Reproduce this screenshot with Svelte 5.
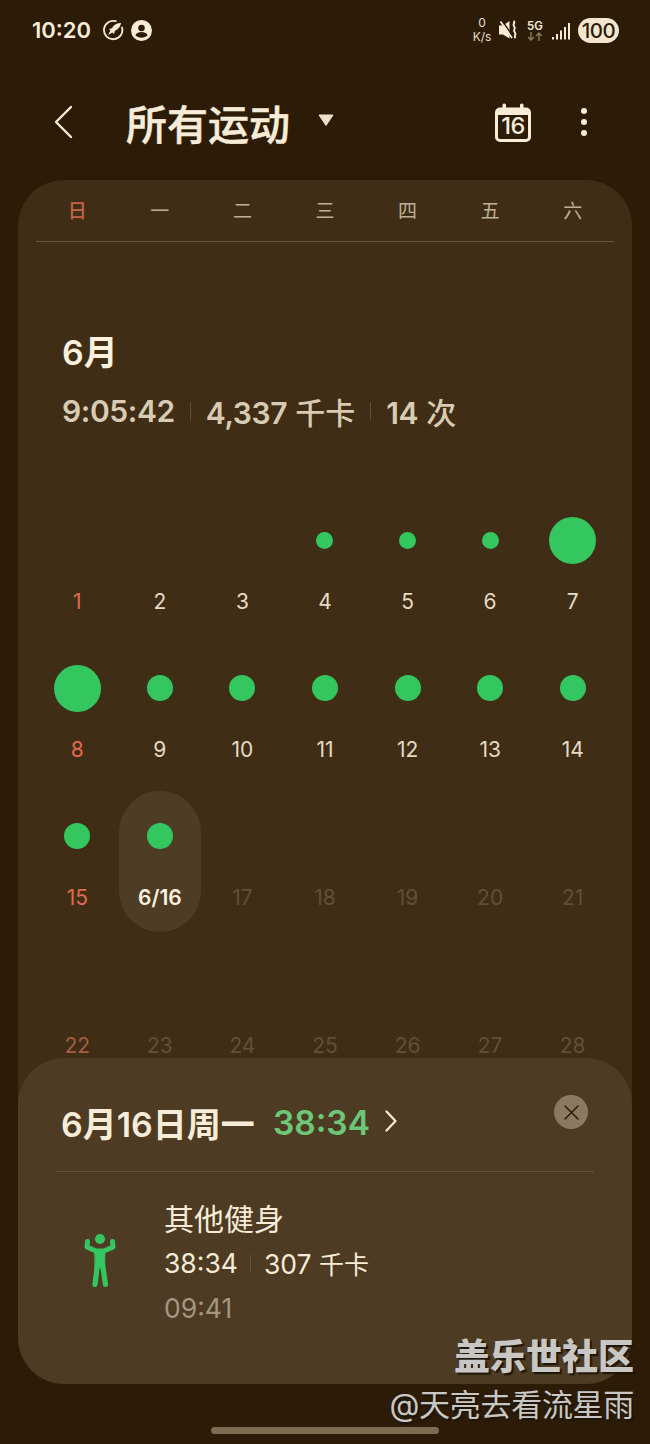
<script lang="ts">
	const weekdays = ['日', '一', '二', '三', '四', '五', '六'];

	// r: dot diameter, 0 for a day with no workout
	const days = [
		{ n: '1', r: 0 }, { n: '2', r: 0 }, { n: '3', r: 0 }, { n: '4', r: 17 }, { n: '5', r: 17 }, { n: '6', r: 17 }, { n: '7', r: 47 },
		{ n: '8', r: 47 }, { n: '9', r: 26 }, { n: '10', r: 26 }, { n: '11', r: 26 }, { n: '12', r: 26 }, { n: '13', r: 26 }, { n: '14', r: 26 },
		{ n: '15', r: 26 }, { n: '6/16', r: 26, selected: true }, { n: '17', r: 0, future: true }, { n: '18', r: 0, future: true }, { n: '19', r: 0, future: true }, { n: '20', r: 0, future: true }, { n: '21', r: 0, future: true },
		{ n: '22', r: 0, future: true }, { n: '23', r: 0, future: true }, { n: '24', r: 0, future: true }, { n: '25', r: 0, future: true }, { n: '26', r: 0, future: true }, { n: '27', r: 0, future: true }, { n: '28', r: 0, future: true }
	];
</script>

<div class="page">
	<div class="status">
		<div class="status-left">
			<span class="clock">10:20</span>
			<svg width="22" height="22" viewBox="0 0 22 22" fill="none">
				<path d="M20 8.500a9.200 9.200 0 1 1-6.300-6.300" stroke="#f7ecd8" stroke-width="1.800" stroke-linecap="round" />
				<path d="M18 4c-3.800.2-6.300 1.900-8 5.200l-3 .8 1.400 1.600-2.400 4.400 4.400-2.400 1.600 1.400.8-3c3.300-1.700 5.900-4.200 6.200-8z" fill="#f7ecd8" />
			</svg>
			<svg width="21" height="21" viewBox="0 0 22 22">
				<circle cx="11" cy="11" r="11" fill="#f7ecd8" />
				<circle cx="11" cy="8.300" r="3.400" fill="#2c1c07" />
				<path d="M4.500 16c1.200-2.300 3.800-3.400 6.500-3.400s5.300 1.100 6.500 3.400c-1.500 1.600-4 2.500-6.500 2.500s-5-.9-6.500-2.500z" fill="#2c1c07" />
			</svg>
		</div>
		<div class="status-right">
			<div class="speed"><span>0</span><span>K/s</span></div>
			<svg class="mute" width="19" height="20" viewBox="0 0 19 20" fill="#f7ecd8">
				<path d="M0 5.500h4L10.500 1v17.500L4 14.500H0z" />
				<path d="M3 0.500L13.500 16" stroke="#2c1c07" stroke-width="1.400" fill="none" />
				<path d="M1.500 1.500L13 18" stroke="#f7ecd8" stroke-width="1.800" fill="none" />
				<path d="M14.500 1c2.600 2-1.800 3.600.6 5.600s-1.800 3.600.6 5.600-1.400 3.400.8 6" stroke="#f7ecd8" stroke-width="2" fill="none" />
			</svg>
			<div class="net">
				<span>5G</span>
				<svg width="16" height="9" viewBox="0 0 16 9" fill="none" stroke="#85775f" stroke-width="1.500">
					<path d="M4 0v8M1 5l3 3 3-3" />
					<path d="M12 9V1M9 4l3-3 3 3" />
				</svg>
			</div>
			<svg class="signal" width="18" height="18" viewBox="0 0 18 18" fill="#f7ecd8">
				<rect x="0" y="15" width="2" height="2.500" />
				<rect x="4" y="12" width="2" height="5.500" />
				<rect x="8" y="8.500" width="2" height="9" />
				<rect x="12" y="5" width="2" height="12.500" />
				<rect x="16" y="1" width="2" height="16.500" />
			</svg>
			<span class="battery">100</span>
		</div>
	</div>

	<header class="topbar">
		<svg class="back" width="19" height="34" viewBox="0 0 19 34" fill="none">
			<path d="M17 2L2 17l15 15" stroke="#f7ecd8" stroke-width="2.400" stroke-linecap="round" stroke-linejoin="round" />
		</svg>
		<h1>所有运动</h1>
		<svg class="caret" width="16" height="12" viewBox="0 0 16 12">
			<path d="M1 1h14L8 11.500z" fill="#eee2cc" stroke="#eee2cc" stroke-linejoin="round" />
		</svg>
		<div class="cal">
			<svg width="36" height="39" viewBox="0 0 36 39" fill="none">
				<rect x="1.500" y="6" width="33" height="31.500" rx="3.500" stroke="#f7ecd8" stroke-width="3" />
				<rect x="1.500" y="6" width="33" height="6" fill="#f7ecd8" />
				<rect x="7.500" y="0.500" width="3.500" height="7" rx="1.500" fill="#f7ecd8" />
				<rect x="25" y="0.500" width="3.500" height="7" rx="1.500" fill="#f7ecd8" />
			</svg>
			<span>16</span>
		</div>
		<div class="more"><i></i><i></i><i></i></div>
	</header>

	<main class="card">
		<div class="weekdays">
			{#each weekdays as w, i}
				<span class:sun={i === 0}>{w}</span>
			{/each}
		</div>

		<div class="month">
			<h2>6月</h2>
			<div class="stats">
				<span>9:05:42</span>
				<i class="sep"></i>
				<span>4,337 <span class="cjk">千卡</span></span>
				<i class="sep"></i>
				<span>14 <span class="cjk">次</span></span>
			</div>
		</div>

		<div class="grid">
			{#each days as d, i}
				<div class="day" class:sun={i % 7 === 0} class:future={d.future} class:selected={d.selected}>
					<div class="slot">
						{#if d.r}
							<span class="dot" style="width: {d.r}px; height: {d.r}px;"></span>
						{/if}
					</div>
					<span class="num">{d.n}</span>
				</div>
			{/each}
		</div>
	</main>

	<section class="sheet">
		<div class="sheet-head">
			<span class="date">6月16日周一</span>
			<span class="total">38:34</span>
			<svg class="chevron" width="12" height="22" viewBox="0 0 12 22" fill="none">
				<path d="M1.500 1.500L10.500 11l-9 9.500" stroke="#f7ecd8" stroke-width="2.200" stroke-linecap="round" stroke-linejoin="round" />
			</svg>
			<button class="close" aria-label="关闭">
				<svg width="15" height="15" viewBox="0 0 15 15" fill="none">
					<path d="M1 1l13 13M14 1L1 14" stroke="#2c1c07" stroke-width="1.500" stroke-linecap="round" />
				</svg>
			</button>
		</div>
		<div class="entry">
			<svg class="figure" width="34" height="54" viewBox="23 14 34 54" fill="none" stroke="#34c65f" stroke-linecap="round" stroke-linejoin="round">
				<circle cx="40" cy="19" r="5" fill="#34c65f" stroke="none" />
				<path d="M27.500 21.500l-.5 5.500L36 31h8l9-4-.5-5.500" stroke-width="5" />
				<path d="M35 30h10l-.5 18h-9z" fill="#34c65f" stroke="#34c65f" stroke-width="1" />
				<path d="M37.500 44L35 64.500M42.500 44L45.500 64.500" stroke-width="5.200" />
			</svg>
			<div class="entry-text">
				<div class="entry-name">其他健身</div>
				<div class="entry-stats">
					<span>38:34</span>
					<i class="sep"></i>
					<span>307 <span class="unit">千卡</span></span>
				</div>
				<div class="entry-time">09:41</div>
			</div>
		</div>
	</section>

	<div class="watermark">
		<strong>盖乐世社区</strong>
		<span>@天亮去看流星雨</span>
	</div>
	<div class="home"></div>
</div>

<style>
	:global(body) {
		margin: 0;
		background: #2c1c07;
	}

	.page {
		position: relative;
		width: 650px;
		height: 1444px;
		overflow: hidden;
		background: #2c1c07;
		color: #f7ecd8;
		font-family: Inter, 'Noto Sans CJK SC', sans-serif;
	}

	.status {
		display: flex;
		justify-content: space-between;
		align-items: center;
		height: 60px;
		padding: 0 31px 0 32px;
		box-sizing: border-box;
	}

	.status-left {
		display: flex;
		align-items: center;
		gap: 7px;
	}

	.clock {
		font-size: 22px;
		font-weight: 600;
		margin-right: 4px;
	}

	.status-right {
		display: flex;
		align-items: center;
	}

	.speed {
		display: flex;
		flex-direction: column;
		align-items: center;
		font-size: 12px;
		line-height: 14px;
		width: 20px;
		color: #e8dcc7;
	}

	.mute {
		margin-left: 7px;
	}

	.net {
		display: flex;
		flex-direction: column;
		align-items: center;
		margin-left: 9px;
		font-size: 11.500px;
		line-height: 12px;
		font-weight: 600;
	}

	.signal {
		margin-left: 9px;
		margin-top: 1px;
	}

	.battery {
		margin-left: 8px;
		width: 41px;
		height: 25px;
		border-radius: 13px;
		background: #f2e6d1;
		color: #2c1c07;
		font-size: 20.500px;
		font-weight: 500;
		line-height: 25px;
		text-align: center;
		letter-spacing: -0.5px;
	}

	.topbar {
		display: flex;
		align-items: center;
		height: 120px;
		padding: 4px 63px 0 54px;
		box-sizing: border-box;
	}

	h1 {
		margin: 6px 0 0 53px;
		font-size: 41px;
		font-weight: 500;
		line-height: 56px;
		-webkit-text-stroke: 0.5px #f7ecd8;
	}

	.caret {
		margin: 0 0 4px 28px;
	}

	.cal {
		position: relative;
		margin-left: auto;
		width: 36px;
		height: 39px;
	}

	.cal svg {
		display: block;
	}

	.cal span {
		position: absolute;
		left: 0;
		right: 0;
		top: 9px;
		text-align: center;
		font-size: 23.500px;
		line-height: 28px;
		font-weight: 500;
		letter-spacing: -0.5px;
	}

	.more {
		display: flex;
		flex-direction: column;
		gap: 5px;
		margin-left: 50px;
	}

	.more i {
		display: block;
		width: 6px;
		height: 6px;
		border-radius: 50%;
		background: #f7ecd8;
	}

	/* ends behind the sheet */
	.card {
		margin: 0 18px;
		height: 1000px;
		padding: 0 18px;
		border-radius: 46px 46px 0 0;
		background: #3f2e15;
	}

	.weekdays {
		display: grid;
		grid-template-columns: repeat(7, 1fr);
		height: 62px;
		border-bottom: 1.500px solid #66563e;
		box-sizing: border-box;
		align-items: center;
		text-align: center;
		font-size: 19px;
		color: #bdb09a;
		padding-bottom: 3px;
	}

	.weekdays .sun {
		color: #c4634a;
		font-weight: 500;
	}

	.month {
		padding: 87px 0 0 26px;
	}

	h2 {
		margin: 0;
		font-size: 34px;
		font-weight: 600;
		line-height: 48px;
		color: #fbf1dd;
	}

	.stats {
		display: flex;
		align-items: center;
		margin-top: 14px;
		height: 40px;
		font-size: 30px;
		font-weight: 600;
		letter-spacing: -0.4px;
		color: #d8cbb3;
	}

	.cjk {
		font-weight: 500;
		letter-spacing: 0;
		margin-left: 1px;
	}

	.sep {
		display: block;
		width: 1px;
		height: 18px;
		margin: 0 15px;
		background: #5f4f38;
	}

	.grid {
		display: grid;
		grid-template-columns: repeat(7, 1fr);
		row-gap: 51px;
		margin-top: 85px;
	}

	.day {
		display: flex;
		flex-direction: column;
		align-items: center;
		gap: 26px;
		color: #e6dac4;
		font-size: 21px;
		margin-bottom: -1px;
	}

	.day.sun {
		color: #e2694f;
	}

	.day.future {
		color: #5f503a;
	}

	.day.sun.future {
		color: #a35c43;
	}

	.day.selected {
		padding: 21px 0 22px;
		margin: -21px 0 -23px;
		border-radius: 41px;
		background: #4e3d25;
		color: #fbf1dd;
		font-weight: 600;
	}

	.slot {
		display: flex;
		align-items: center;
		justify-content: center;
		height: 48px;
	}

	.dot {
		display: block;
		border-radius: 50%;
		background: #34c65f;
	}

	.num {
		line-height: 24px;
	}

	.sheet {
		position: absolute;
		left: 18px;
		right: 18px;
		top: 1058px;
		height: 326px;
		border-radius: 46px;
		background: #4d3b23;
		padding: 0 38px;
		box-sizing: border-box;
	}

	.sheet-head {
		position: relative;
		display: flex;
		align-items: center;
		height: 114px;
		padding: 16px 0 0 5px;
		box-sizing: border-box;
		border-bottom: 1.500px solid #655439;
		font-size: 33.500px;
		font-weight: 600;
	}

	.date {
		font-size: 34px;
	}

	.total {
		margin: 0 15px 0 18px;
		color: #6cc777;
	}

	.chevron {
		margin-bottom: 3px;
	}

	.close {
		position: absolute;
		right: 6px;
		top: 37px;
		display: flex;
		align-items: center;
		justify-content: center;
		width: 34px;
		height: 34px;
		border: 0;
		padding: 0;
		border-radius: 50%;
		background: #8b7a63;
	}

	.entry {
		display: flex;
		align-items: flex-start;
		padding-top: 27px;
	}

	.figure {
		margin: 35px 0 0 27px;
	}

	.entry-text {
		margin-left: 47px;
	}

	.entry-name {
		font-size: 30px;
		line-height: 40px;
	}

	.entry-stats {
		display: flex;
		align-items: center;
		margin-top: 6px;
		height: 36px;
		font-size: 26.500px;
	}

	.unit {
		font-size: 25px;
	}

	.entry-stats .sep {
		height: 16px;
		margin: 0 13px 0 12px;
		background: #66563e;
	}

	.entry-time {
		margin-top: 9px;
		font-size: 26.500px;
		line-height: 36px;
		color: #a39682;
	}

	.watermark {
		position: absolute;
		right: 16px;
		top: 1334px;
		display: flex;
		flex-direction: column;
		align-items: flex-end;
		color: #c9c7c4;
		text-shadow: 2px 2px 1px #1d1508;
	}

	.watermark strong {
		font-size: 36px;
		line-height: 46px;
		font-weight: 900;
	}

	.watermark span {
		font-size: 31px;
		line-height: 40px;
		margin-top: 5px;
		font-weight: 400;
		letter-spacing: -0.3px;
	}

	.home {
		position: absolute;
		left: 211px;
		top: 1427px;
		width: 228px;
		height: 7px;
		border-radius: 4px;
		background: #7d6c51;
	}
</style>
